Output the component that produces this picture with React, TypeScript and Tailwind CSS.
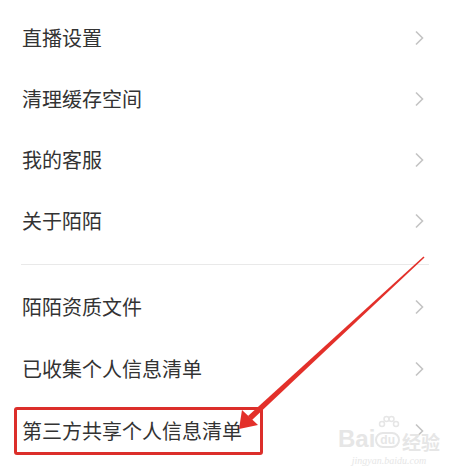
import React from 'react';

const FONT = { fontFamily: '"Noto Sans CJK SC", "Noto Sans", sans-serif' };

const TOP_ITEMS = ['直播设置', '清理缓存空间', '我的客服', '关于陌陌'];
const BOTTOM_ITEMS = ['陌陌资质文件', '已收集个人信息清单', '第三方共享个人信息清单'];

function Chevron() {
  return (
    <svg width="10" height="16" viewBox="0 0 10 16" className="shrink-0">
      <path d="M2 1.5 L8.5 8 L2 14.5" fill="none" stroke="#c4c4c4" strokeWidth="1.6" />
    </svg>
  );
}

function Row({ label, tall }: { label: string; tall?: boolean }) {
  return (
    <div className={`flex items-center justify-between pl-[22px] pr-[32px] ${tall ? 'h-[62px]' : 'h-[61px]'}`}>
      <span className="text-[20px] leading-none text-[#333333]">{label}</span>
      <Chevron />
    </div>
  );
}

// red annotation arrow from the divider down to the highlighted row
function Arrow() {
  return (
    <svg className="absolute left-0 top-0 pointer-events-none" width="456" height="472" viewBox="0 0 456 472">
      <polygon points="423.5,256.5 424.5,257.5 252,420 248,416" fill="#e3302a" />
      <polygon points="239,429 242,410 258,425" fill="#e3302a" />
    </svg>
  );
}

function Watermark() {
  return (
    <div className="absolute left-[338px] top-[413px] flex flex-col items-center text-[#e6e6e6] pointer-events-none">
      <svg className="absolute left-[40px] top-[2px]" width="22" height="18" viewBox="0 0 22 18">
        <g fill="none" stroke="#e6e6e6" strokeWidth="1.5">
          <circle cx="4" cy="9" r="2.5" />
          <circle cx="8.5" cy="4" r="2.5" />
          <circle cx="13.5" cy="4" r="2.5" />
          <circle cx="18" cy="9" r="2.5" />
        </g>
      </svg>
      <div className="flex items-end leading-none mt-[14px]">
        <span className="text-[24px] font-bold" style={{ fontFamily: '"Liberation Sans", sans-serif' }}>Bai</span>
        <span className="text-[12px] font-bold px-[3px] mb-[3px] rounded-full border-2 border-[#e6e6e6]" style={{ fontFamily: '"Liberation Sans", sans-serif' }}>du</span>
        <span className="text-[19px] font-bold ml-[2px]">经验</span>
      </div>
      <span className="text-[10px] italic mt-[2px]" style={{ fontFamily: '"Liberation Serif", serif' }}>jingyan.baidu.com</span>
    </div>
  );
}

export default function App() {
  return (
    <div className="relative w-[456px] h-[472px] bg-white overflow-hidden" style={FONT}>
      <div className="flex flex-col pt-[7px]">
        {TOP_ITEMS.map((t) => (
          <Row key={t} label={t} />
        ))}
        <div className="mx-[21px] mt-[13px] h-px bg-[#e9e9e9] w-[408px]" />
        <div className="mt-[11px] flex flex-col">
          {BOTTOM_ITEMS.map((t) => (
            <Row key={t} label={t} tall />
          ))}
        </div>
      </div>
      <Watermark />
      <div className="absolute left-[14px] top-[407px] w-[249px] h-[48px] border-[3px] border-[#dc2f2a] rounded-[3px]" />
      <Arrow />
    </div>
  );
}
